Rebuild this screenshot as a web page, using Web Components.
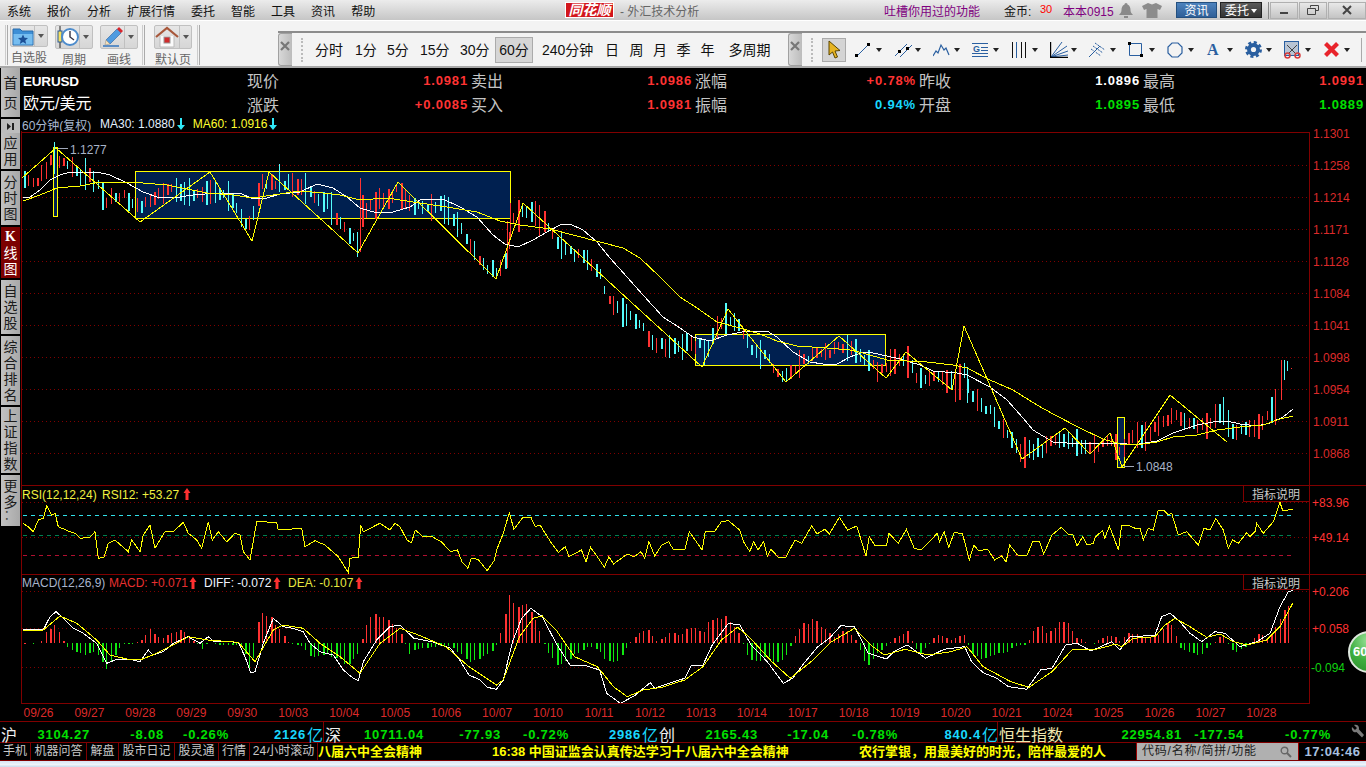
<!DOCTYPE html>
<html lang="zh">
<head>
<meta charset="utf-8">
<title>同花顺 - 外汇技术分析</title>
<style>
  html, body { margin: 0; height: 767px; overflow: hidden; background: #000; }
  body { font-family: "Liberation Sans", "Noto Sans CJK SC", sans-serif; }
</style>
</head>
<body>
<ths-app></ths-app>

<script>
const FONT = '"Liberation Sans", "Noto Sans CJK SC", sans-serif';
const ARROW_DOWN = '<svg width="8" height="12" viewBox="0 0 8 12"><path d="M3 0h2v7h3l-4 5-4-5h3z" fill="#30e8f8"/></svg>';

// ---------- title bar ----------
class TitleBar extends HTMLElement {
  constructor() {
    super();
    this.attachShadow({ mode: 'open' });
  }
  connectedCallback() {
    const menu = ['系统', '报价', '分析', '扩展行情', '委托', '智能', '工具', '资讯', '帮助'];
    this.shadowRoot.innerHTML = `
    <style>
      :host { display: flex; align-items: center; height: 20px; font: 12px ${FONT};
              background: linear-gradient(#ececec, #c6c6c6); color: #111; box-sizing: border-box; }
      .menu { flex: 0 0 566px; display: flex; gap: 16px; padding-left: 7px; box-sizing: border-box; }
      .logo { flex: 0 0 47px; height: 14px; line-height: 14px; background: #d2161c; color: #fff; font-size: 14px;
              font-weight: bold; font-style: italic; text-align: center; outline: 1px solid #fff; white-space: nowrap; overflow: hidden; }
      .sub { flex: 0 0 264px; margin-left: 7px; color: #666; }
      .tucao { flex: 0 0 120px; color: #800080; }
      .coin { flex: 0 0 36px; color: #111; }
      .num { flex: 0 0 23px; color: #f00; font-size: 11px; margin-top: -3px; }
      .user { flex: 0 0 55px; color: #800080; }
      .ico { display: block; }
      .btn { height: 16px; line-height: 16px; color: #fff; text-align: center; box-sizing: border-box; }
      .zx { flex: 0 0 41px; margin-left: 14px; background: linear-gradient(#4d82bd, #2f5f98); border: 1px solid #24507f; }
      .wt { flex: 0 0 42px; margin-left: 3px; background: linear-gradient(#5a5a5a, #333); border: 1px solid #222; }
      .wt i { display: inline-block; border: 3px solid transparent; border-top: 4px solid #fff; border-bottom: 0; margin: 0 0 2px 2px; }
      .win { display: flex; margin-left: 6px; gap: 1px; border-left: 1px solid #888; padding-left: 1px; }
      .win div { height: 17px; width: 28px; display: flex; align-items: center; justify-content: center;
                 background: linear-gradient(#e8e8e8, #c4c4c4); border: 1px solid #b0b0b0; box-sizing: border-box; }
      .win div:last-child { width: 38px; }
    </style>
    <div class="menu">${menu.map(m => `<span>${m}</span>`).join('')}</div>
    <div class="logo">同花顺</div>
    <div class="sub">- 外汇技术分析</div>
    <div class="tucao">吐槽你用过的功能</div>
    <div class="coin">金币:</div>
    <div class="num">30</div>
    <div class="user">本本0915</div>
    <svg class="ico" width="16" height="17" viewBox="0 0 16 17" style="margin-right:8px"><path d="M8 1c1 0 1.500.8 1.500 1.500C12 3.500 12.500 6 12.500 8c0 2 1 3.500 2.500 5H1c1.500-1.500 2.500-3 2.500-5 0-2 .5-4.500 3-5.500C6.500 1.800 7 1 8 1z" fill="#8a8a8a"/><rect x="6" y="14" width="4" height="2" fill="#8a8a8a"/></svg>
    <svg class="ico" width="20" height="16" viewBox="0 0 20 16"><path d="M6 1l4 1.500L14 1l6 3-2 4-2.500-1v9h-11V7L2 8 0 4z" fill="#8c8c8c"/></svg>
    <div class="btn zx">资讯</div>
    <div class="btn wt">委托<i></i></div>
    <div class="win">
      <div><svg width="10" height="10"><rect x="1" y="7" width="8" height="2" fill="#444"/></svg></div>
      <div><svg width="12" height="10"><path d="M3.500 2.500v-2h8v5h-3M.5 3.500h8v6h-8z" fill="none" stroke="#444"/></svg></div>
      <div><svg width="10" height="10"><path d="M1 1l8 8M9 1L1 9" stroke="#444" stroke-width="2"/></svg></div>
    </div>`;
  }
}
customElements.define('title-bar', TitleBar);

// ---------- big button with a label under it (left toolbar) ----------
class ToolBtn extends HTMLElement {
  constructor() {
    super();
    this.attachShadow({ mode: 'open' });
  }
  connectedCallback() {
    this.shadowRoot.innerHTML = `
    <style>
      :host { display: flex; flex-direction: column; align-items: center; width: 38px; font: 12px ${FONT}; color: #666; }
      .b { display: flex; width: 38px; height: 25px; box-sizing: border-box; border: 1px solid #c0c0c0; border-radius: 2px;
           background: linear-gradient(#e6e6e6, #d6d6d6); }
      .i { flex: 1; display: flex; align-items: center; justify-content: center; border-right: 1px solid #c0c0c0; }
      .d { flex: 0 0 12px; display: flex; align-items: center; justify-content: center; }
      .d i { border: 3.500px solid transparent; border-top: 4px solid #555; border-bottom: 0; }
      .l { margin-top: 3px; line-height: 16px; white-space: nowrap; }
    </style>
    <div class="b"><div class="i"><slot></slot></div><div class="d"><i></i></div></div>
    <div class="l">${this.getAttribute('label')}</div>`;
  }
}
customElements.define('tool-btn', ToolBtn);

// ---------- grey strip with the x at the start of a toolbar ----------
class BarGrip extends HTMLElement {
  constructor() {
    super();
    this.attachShadow({ mode: 'open' });
  }
  connectedCallback() {
    this.shadowRoot.innerHTML = `
    <style>
      :host { display: flex; flex: 0 0 auto; height: 33px; }
      .x { width: 14px; background: linear-gradient(90deg, #d8d8d8, #bcbcbc); border: 1px solid #a0a0a0; border-right: 0;
           border-radius: 3px 0 0 3px; box-sizing: border-box; padding: 4px 0 0 1px; }
      .g { width: 4px; height: 24px; margin: 5px 0 0 9px; border-left: 2px dotted #bbb; box-sizing: border-box; }
    </style>
    <div class="x"><svg width="10" height="10" viewBox="0 0 10 10"><path d="M1 1l8 8M9 1L1 9" stroke="#777" stroke-width="2.200"/></svg></div>
    <div class="g"></div>`;
  }
}
customElements.define('bar-grip', BarGrip);

// ---------- drawing tool icon + small drop arrow ----------
class DrawTool extends HTMLElement {
  constructor() {
    super();
    this.attachShadow({ mode: 'open' });
  }
  connectedCallback() {
    this.shadowRoot.innerHTML = `
    <style>
      :host { display: flex; align-items: center; flex: 0 0 39px; height: 20px; }
      .s { width: 20px; height: 18px; display: flex; align-items: center; }
      i { margin-left: 1px; border: 3.500px solid transparent; border-top: 4px solid #222; border-bottom: 0; }
    </style>
    <div class="s"><slot></slot></div><i></i>`;
  }
}
customElements.define('draw-tool', DrawTool);

// ---------- toolbars ----------
class ToolBar extends HTMLElement {
  constructor() {
    super();
    this.attachShadow({ mode: 'open' });
  }
  connectedCallback() {
    const periods = [['分时', 315, 27], ['1分', 355, 21], ['5分', 387, 20], ['15分', 420, 27], ['30分', 460, 27],
      ['60分', 495, 38, 1], ['240分钟', 542, 49], ['日', 605, 14], ['周', 629, 15], ['月', 653, 14], ['季', 676, 15], ['年', 700, 15], ['多周期', 728, 43]];
    let last = 315;
    const items = periods.map(p => {
      const gap = p[1] - last;
      last = p[1] + p[2];
      return `<span class="p${p[3] ? ' on' : ''}" style="margin-left:${gap}px;width:${p[2]}px">${p[0]}</span>`;
    }).join('');
    this.shadowRoot.innerHTML = `
    <style>
      :host { display: flex; height: 48px; box-sizing: border-box; background: #f3f3f3; border-top: 1px solid #fff;
              border-bottom: 2px solid #a8a8a8; font: 14px ${FONT}; color: #111; position: relative; }
      .left { flex: 0 0 278px; display: flex; box-sizing: border-box; padding: 4px 0 0 5px; }
      .sep { width: 3px; height: 40px; border-right: 1px solid #aaa; border-left: 1px solid #ccc; box-sizing: border-box; flex: 0 0 auto; }
      .left tool-btn { margin-left: 7px; }
      .right { flex: 1; align-self: flex-end; display: flex; align-items: center; height: 35px; border-top: 2px solid #8c8c8c; box-sizing: border-box; }
      .periods { display: flex; align-items: center; flex: 0 0 473px; margin-left: 10px; height: 33px; }
      .p { text-align: center; white-space: nowrap; height: 26px; line-height: 26px; box-sizing: border-box; }
      .on { background: #d6d6d6; border: 1px solid #ababab; line-height: 24px; }
      .cursor { width: 24px; height: 24px; margin: 0 9px 0 7px; display: flex; align-items: center; justify-content: center;
                background: #d4d4d4; border: 1px solid #aaa; box-sizing: border-box; }
      .tools { display: flex; align-items: center; }
      .end { width: 1px; height: 24px; background: #aaa; }
    </style>
    <div class="left">
      <div class="sep"></div>
      <tool-btn label="自选股" style="margin-left:2px"><svg width="22" height="20" viewBox="0 0 22 20"><path d="M1 3h7l2 2h11v14H1z" fill="#3d8fd6" stroke="#2b6cab"/><path d="M1.500 8h19v10.500h-19z" fill="#76bdf0"/><path d="M11 8.500l1.500 3.300 3.500.3-2.700 2.300.9 3.500-3.200-1.900-3.200 1.900.9-3.500L6 12.100l3.500-.3z" fill="#1c4f96"/></svg></tool-btn>
      <tool-btn label="周期"><svg width="22" height="22" viewBox="0 0 22 22"><path d="M3 0v22" stroke="#222"/><rect x="1" y="5" width="4" height="11" fill="#f5e060" stroke="#2a5a9a"/><circle cx="13" cy="11" r="8" fill="#fff" stroke="#4d8ccc" stroke-width="2"/><path d="M13 5v6l4 3" fill="none" stroke="#334" stroke-width="1.400"/></svg></tool-btn>
      <tool-btn label="画线"><svg width="22" height="22" viewBox="0 0 22 22"><path d="M1 20h16" stroke="#3d7cc0" stroke-width="1.600"/><path d="M4 14L15 3l4 4L8 18z" fill="#4f9be0" stroke="#2a5f9e" stroke-width=".6"/><path d="M4 14l4 4-5 1z" fill="#f4dfb8" stroke="#888" stroke-width=".5"/><path d="M15 3l2-2 4 4-2 2z" fill="#d8262c"/></svg></tool-btn>
      <div class="sep" style="margin-left:4px"></div>
      <tool-btn label="默认页" style="margin-left:9px"><svg width="24" height="22" viewBox="0 0 24 22"><path d="M5 10v11h14V10" fill="#fbfbfb" stroke="#bbb"/><path d="M1 11L12 2l11 9" fill="none" stroke="#a8573a" stroke-width="2.200"/><rect x="9" y="11" width="6" height="6" fill="#d02c2c" stroke="#999"/></svg></tool-btn>
      <div class="sep" style="margin-left:5px"></div>
    </div>
    <div class="right">
      <bar-grip></bar-grip>
      <div class="periods">${items}</div>
      <bar-grip></bar-grip>
      <div class="cursor"><svg width="14" height="20" viewBox="0 0 14 20"><path d="M2 1v14l3.500-3 2.500 6 2.500-1-2.500-6 5-.5z" fill="#e6b422" stroke="#5a4500"/></svg></div>
      <div class="tools">
        <draw-tool><svg width="16" height="16" viewBox="0 0 16 16"><path d="M2 14L14 2" stroke="#2a5fa0"/><rect x="0" y="12" width="3" height="3"/><rect x="12" y="1" width="3" height="3"/></svg></draw-tool>
        <draw-tool><svg width="20" height="16" viewBox="0 0 20 16"><path d="M1 14L13 2M6 15L18 3" stroke="#2a5fa0"/><rect x="4" y="8" width="3" height="3"/><rect x="12" y="5" width="3" height="3"/></svg></draw-tool>
        <draw-tool><svg width="17" height="16" viewBox="0 0 17 16"><path d="M0 14l3-5 2 2 3-8 3 5 2-2 3 7" fill="none" stroke="#2a5fa0" stroke-width="1.200"/></svg></draw-tool>
        <draw-tool><svg width="16" height="16" viewBox="0 0 16 16"><path d="M0 1.500h16M9 5.500h7M9 8.500h7M0 11.500h16M0 14.500h16" stroke="#2a5fa0"/><text x="1" y="10" font-size="9" font-weight="bold" font-family="Liberation Sans" fill="#2a5fa0">G</text></svg></draw-tool>
        <draw-tool><svg width="16" height="16" viewBox="0 0 16 16"><path d="M1.500 0v16M5.500 0v16M10.500 0v16M14.500 0v16" stroke="#111"/><path d="M5.500 0v16" stroke="#2a5fa0"/></svg></draw-tool>
        <draw-tool><svg width="18" height="16" viewBox="0 0 18 16"><path d="M1 15L12 0M1 15L17 4M1 15L18 9M1 15L18 13" stroke="#2a5fa0"/><path d="M.5 0v15.500H18" fill="none" stroke="#000" stroke-width="1.400"/></svg></draw-tool>
        <draw-tool><svg width="17" height="16" viewBox="0 0 17 16"><path d="M0 15L11 4" stroke="#2a5fa0"/><path d="M6 1l10 7M4 4l10 7M2 7l10 7" stroke="#2a5fa0" stroke-dasharray="2 1"/></svg></draw-tool>
        <draw-tool><svg width="16" height="16" viewBox="0 0 16 16"><path d="M1.500 1.500h12v12h-12z" fill="none" stroke="#2a5fa0"/><rect y="0" width="3" height="3"/><rect x="12" y="12" width="3" height="3"/></svg></draw-tool>
        <draw-tool><svg width="16" height="16" viewBox="0 0 16 16"><path d="M5 1h6l4 4v6l-4 4H5l-4-4V5z" fill="none" stroke="#2a5fa0" stroke-width="1.200"/></svg></draw-tool>
        <draw-tool><svg width="16" height="18" viewBox="0 0 16 18" style="overflow:visible"><text x="1" y="14" font-size="16" font-weight="bold" font-family="Liberation Serif" fill="#2a5fa0">A</text></svg></draw-tool>
        <draw-tool><svg width="17" height="17" viewBox="0 0 17 17"><circle cx="8.500" cy="8.500" r="6.500" fill="#2a5fa0"/><circle cx="8.500" cy="8.500" r="7" fill="none" stroke="#2a5fa0" stroke-width="3" stroke-dasharray="3 2.500"/><circle cx="8.500" cy="8.500" r="2.600" fill="#f3f3f3"/></svg></draw-tool>
        <draw-tool><svg width="17" height="18" viewBox="0 0 17 18"><rect x=".5" y=".5" width="14" height="14" fill="#b8c4d4" stroke="#2a5fa0"/><path d="M3 4l9 9M13 4l-9 9" stroke="#444"/><circle cx="3.500" cy="14.500" r="2.500" fill="none" stroke="#d83c3c" stroke-width="1.500"/><circle cx="13.500" cy="14.500" r="2.500" fill="none" stroke="#d83c3c" stroke-width="1.500"/></svg></draw-tool>
        <draw-tool style="flex-basis:38px"><svg width="17" height="17" viewBox="0 0 17 17"><path d="M2.500 2.500l12 12M14.500 2.500l-12 12" stroke="#e8232b" stroke-width="4.200"/></svg></draw-tool>
      </div>
      <div class="end"></div>
    </div>`;
  }
}
customElements.define('tool-bar', ToolBar);

// ---------- left side tabs ----------
class SideTab extends HTMLElement {
  constructor() {
    super();
    this.attachShadow({ mode: 'open' });
  }
  connectedCallback() {
    const on = this.hasAttribute('active');
    const text = this.textContent.trim();
    const lh = this.getAttribute('lh') || 16;
    // one character per line, the trailing dots stay together
    const body = text.replace(/\.+$/, '');
    const dots = text.slice(body.length);
    const chars = [...body].map(ch => ch === 'K' ? '<span class="c k">K</span>' : `<span class="c">${ch}</span>`).join('')
      + (dots ? `<span class="dots">${dots}</span>` : '');
    this.shadowRoot.innerHTML = `
    <style>
      :host { display: flex; flex-direction: column; align-items: center; justify-content: center; box-sizing: border-box;
              width: 19px; height: ${this.getAttribute('h')}px; margin-left: 1px; overflow: hidden; flex: 0 0 auto;
              background: ${on ? '#7c0000' : 'linear-gradient(90deg,#c2c2c2,#a8a8a8)'}; color: ${on ? '#fff' : '#1c1c1c'};
              font: 14px/${lh}px ${FONT}; text-align: center; }
      .c { display: block; width: 15px; }
      .k { font-weight: bold; font-family: "Liberation Serif", serif; }
      .dots { display: block; writing-mode: vertical-rl; font-size: 14px; line-height: 15px; letter-spacing: 3px; height: 14px; }
    </style>
    ${chars}`;
  }
}
customElements.define('side-tab', SideTab);

class SideTabs extends HTMLElement {
  constructor() {
    super();
    this.attachShadow({ mode: 'open' });
  }
  connectedCallback() {
    this.shadowRoot.innerHTML = `
    <style>
      :host { display: flex; flex-direction: column; gap: 2px; flex: 0 0 21px; background: #000; }
      .play { height: 14px; background: #bdbdbd; margin: 0 0 -2px 1px; width: 19px; display: flex; align-items: center; justify-content: center; }
    </style>
    <side-tab h="49" lh="20">首页</side-tab>
    <div class="play"><svg width="9" height="9"><path d="M1 1l4 3.500L1 8z M6 1h2v7H6z" fill="#222"/></svg></div>
    <side-tab h="36">应用</side-tab>
    <side-tab h="54">分时图</side-tab>
    <side-tab h="51" active>K线图</side-tab>
    <side-tab h="54">自选股</side-tab>
    <side-tab h="69">综合排名</side-tab>
    <side-tab h="66">上证指数</side-tab>
    <side-tab h="51">更多..</side-tab>`;
  }
}
customElements.define('side-tabs', SideTabs);

// ---------- quote header ----------
class QuoteHead extends HTMLElement {
  constructor() {
    super();
    this.attachShadow({ mode: 'open' });
  }
  connectedCallback() {
    const R = '#ff3333', G = '#00e000', W = '#ffffff', C = '#19d8ff';
    const cells = [
      ['现价', '1.0981', R], ['卖出', '1.0986', R], ['涨幅', '+0.78%', R], ['昨收', '1.0896', W], ['最高', '1.0991', R],
      ['涨跌', '+0.0085', R], ['买入', '1.0981', R], ['振幅', '0.94%', C], ['开盘', '1.0895', G], ['最低', '1.0889', G]
    ];
    const cell = c => `<div class="c"><span class="k">${c[0]}</span><b style="color:${c[2]}">${c[1]}</b></div>`;
    this.shadowRoot.innerHTML = `
    <style>
      :host { display: block; background: #000; font: 16px ${FONT}; color: #fff; }
      .g { display: grid; grid-template-columns: 226px repeat(5, 224px); grid-auto-rows: 24px; }
      .n { padding-left: 2px; line-height: 24px; white-space: nowrap; }
      .en { font-size: 13.500px; font-weight: bold; letter-spacing: -.2px; line-height: 27px; }
      .c { display: flex; justify-content: space-between; align-items: center; padding-right: 3px; }
      .k { color: #c4c4c4; }
      b { font-size: 13px; letter-spacing: .85px; }
      .info { display: flex; align-items: center; height: 14px; margin-top: 1px; padding-left: 1px; font-size: 12px; white-space: nowrap; }
      .info svg { margin: 0 0 0 2px; }
    </style>
    <div class="g">
      <div class="n en">EURUSD</div>${cells.slice(0, 5).map(cell).join('')}
      <div class="n">欧元/美元</div>${cells.slice(5).map(cell).join('')}
    </div>
    <div class="info">
      <span style="color:#a8b8d0;width:78px">60分钟(复权)</span>
      <span style="color:#e4f0ff">MA30: 1.0880</span>${ARROW_DOWN}
      <span style="color:#ffff30;margin-left:8px">MA60: 1.0916</span>${ARROW_DOWN}
    </div>`;
  }
}
customElements.define('quote-head', QuoteHead);

// ---------- helpers for the chart: traced points, crop space -> page space ----------
function tr(list, ox, oy, sx, sy) {
  const out = [];
  for (let i = 0; i < list.length; i += 2) out.push([ox + list[i] / sx, oy + list[i + 1] / (sy || sx)]);
  return out;
}
function interp(p, x) {
  if (x <= p[0][0]) return p[0][1];
  for (let i = 1; i < p.length; i++) {
    if (x <= p[i][0]) {
      const t = (x - p[i - 1][0]) / (p[i][0] - p[i - 1][0] || 1);
      return p[i - 1][1] + t * (p[i][1] - p[i - 1][1]);
    }
  }
  return p[p.length - 1][1];
}
function stitch(a, b, c) {
  return [...a.filter(p => p[0] <= 400), ...b.filter(p => p[0] > 400 && p[0] < 1120), ...c.filter(p => p[0] >= 1120)];
}
const line = (pts, color, w) =>
  `<polyline points="${pts.map(p => p[0].toFixed(1) + ',' + p[1].toFixed(1)).join(' ')}" fill="none" stroke="${color}" stroke-width="${w || 1}"/>`;

// traced price path: the middle of the candles
const MID = [24,178,35,185,45,170,52,160,56,155,62,165,70,165,80,175,90,178,97,180,100,190,104,205,110,195,120,195,130,200,138,205,142,205,150,200,160,195,170,190,180,190,190,195,205,192,215,192,225,195,235,205,245,225,252,225,256,200,262,180,270,185,280,180,290,185,300,185,310,195,320,200,330,205,340,225,350,235,357,245,362,210,370,205,380,200,390,195,398,190,405,197,415,205,425,205,440,205,450,215,460,225,470,245,480,260,490,270,497,270,505,260,510,235,515,215,525,210,535,215,545,225,555,240,570,250,585,260,600,275,610,305,620,312,630,315,640,325,650,340,660,345,670,345,680,345,690,345,700,345,705,355,712,335,720,325,728,318,738,325,745,340,755,350,765,355,775,370,785,378,795,372,805,360,815,355,825,352,835,350,845,345,855,350,865,360,875,370,885,368,895,362,905,358,915,375,925,378,935,378,945,378,955,385,965,370,970,395,980,405,990,410,1000,425,1010,440,1020,452,1030,450,1040,450,1050,442,1060,437,1070,440,1080,447,1095,450,1110,440,1120,455,1130,437,1145,435,1160,425,1175,415,1190,425,1205,425,1220,415,1230,430,1250,428,1265,420,1272,405,1278,390];
const MA30 = [23,198,30,197,40,190,50,180,60,175,70,172,80,172,97,172,110,175,127,183,143,192,157,197,173,198,193,195,217,193,240,193,253,199,267,198,280,194,300,192,317,184,333,188,347,197,360,208,377,213,393,212,410,207,420,200,443,199,460,207,477,217,493,235,505,244,518,247,533,240,547,232,560,225,570,224,583,230,597,242,610,258,627,277,643,295,663,317,680,328,693,337,710,341,727,335,747,331,767,331,777,337,793,352,810,362,823,364,837,364,850,357,863,352,873,353,887,356,900,359,920,365,933,371,957,373,967,375,990,387,1007,400,1023,418,1033,430,1053,442,1067,443,1093,444,1120,443,1133,445,1157,441,1173,433,1197,425,1213,422,1227,421,1240,424,1257,426,1270,423,1283,417,1293,409];
const MA60 = [23,201,40,195,57,188,80,186,100,182,120,182,143,183,167,185,187,189,207,193,233,195,253,198,273,195,300,191,323,193,340,195,360,200,387,198,413,202,447,207,477,212,500,221,520,225,550,229,573,235,600,242,623,248,640,258,660,277,680,297,697,308,717,322,740,328,760,334,777,341,797,346,827,348,850,350,863,353,887,360,927,362,953,365,967,368,990,380,1013,390,1037,405,1053,414,1080,428,1103,439,1120,444,1143,444,1157,442,1173,437,1197,435,1217,430,1240,427,1263,425,1280,419,1293,416];
const ZIG = [22,178,56,148,140,222,210,172,252,241,269,172,358,253,398,182,496,279,523,203,702,367,728,309,786,382,839,336,886,378,906,352,952,390,964,326,1022,459,1065,428,1090,454,1110,433,1122,467,1170,395,1227,442];

const RSI = stitch(
  tr([68,130,85,140,100,155,115,120,130,115,140,78,155,105,165,100,175,140,210,155,225,160,240,175,270,172,285,155,295,235,312,232,325,190,345,180,385,215,395,180,420,215,430,165,450,135,465,205,495,155,520,155,550,127,565,160,590,180,605,205,625,125,637,180,655,155,680,185,705,160,720,165,730,215,750,240,770,125,830,127,835,150,905,145,915,200,945,182,975,195,1015,230,1045,278,1050,235,1075,232,1082,135,1090,155,1140,130,1170,150,1185,130,1200,140], 0, 480, 3),
  tr([0,105,15,150,25,158,33,120,50,140,70,140,90,155,110,185,125,180,135,215,148,235,155,205,170,208,190,242,205,212,212,175,225,130,238,68,248,118,268,82,285,82,295,110,305,105,330,160,345,187,360,170,368,200,395,180,405,215,415,172,430,200,445,232,455,200,465,222,495,192,510,200,525,185,533,205,542,155,555,198,570,165,585,155,595,178,620,180,630,125,658,180,665,125,685,125,700,95,715,92,740,120,748,155,762,185,770,155,780,180,792,155,800,198,808,178,825,203,840,203,860,150,875,160,897,107,908,132,925,118,935,132,957,82,975,120,995,108,1015,198,1022,140,1035,168,1060,165,1065,130,1085,160,1103,118,1120,175,1135,180,1160,145,1170,130,1175,155,1185,125,1195,172,1207,128,1225,130,1240,210,1250,165,1260,182,1280,178,1295,210,1310,198,1320,215,1328,165,1345,195,1365,198,1378,155,1393,155,1402,192,1420,135,1440,112,1455,132,1465,132,1475,168,1487,140,1497,165,1510,160,1515,140,1530,122,1535,145,1545,108,1565,180], 400, 490, 2.178, 3),
  tr([0,545,10,560,25,527,40,550,55,600,65,525,85,525,105,535,120,535,130,570,145,535,160,540,175,480,190,480,205,495,215,490,235,555,260,545,295,585,312,535,330,540,347,505,370,540,385,595,398,570,415,580,440,548,450,560,465,545,470,520,490,550,520,515,540,457,548,482,578,478], 1100, 350, 3)
);
const DIFF = stitch(
  tr([68,447,130,450,150,410,168,395,185,410,220,445,250,460,290,490,310,530,320,550,345,540,385,537,420,545,445,510,460,525,490,515,520,490,565,470,600,490,625,470,640,483,715,487,735,530,752,578,765,575,790,490,820,415,850,440,880,445,910,455,930,490,960,515,1000,525,1030,570,1060,595,1075,602,1090,545,1130,480,1170,440,1200,435], 0, 480, 3),
  tr([0,403,30,445,70,455,110,475,130,510,150,555,175,570,190,592,210,598,225,570,245,455,265,385,285,355,310,380,340,460,370,525,400,525,435,540,450,610,480,640,510,618,545,578,555,595,575,585,620,565,635,525,660,525,680,465,715,400,740,405,765,465,800,515,835,580,855,565,880,520,910,470,935,445,960,407,990,410,1020,490,1060,507,1075,485,1105,465,1145,505,1185,478,1230,470,1245,515,1270,548,1300,565,1325,590,1365,598,1395,540,1420,535,1450,465,1475,460,1505,483,1550,455,1568,480], 400, 490, 2.178, 3),
  tr([60,900,90,860,130,858,165,855,185,800,210,790,235,810,270,850,305,875,345,845,375,850,420,890,470,875,510,850,540,770,565,725,578,722], 1100, 350, 3)
);
const DEA = stitch(
  tr([68,450,130,450,180,408,230,430,290,480,330,525,380,537,420,540,470,520,520,495,565,470,625,480,715,487,765,545,820,450,850,435,910,445,960,490,1020,530,1080,580,1140,490,1200,445], 0, 480, 3),
  tr([0,412,40,435,100,470,150,530,210,585,225,570,260,440,290,385,310,378,340,420,380,500,430,530,465,590,495,620,530,600,570,592,620,570,660,530,700,450,735,412,760,440,810,515,850,565,900,510,940,455,990,415,1030,470,1055,495,1100,478,1150,495,1200,485,1235,470,1270,530,1330,575,1370,592,1420,545,1465,478,1510,480,1560,462], 400, 490, 2.178, 3),
  tr([65,890,100,865,165,860,195,825,225,805,270,830,320,862,360,852,400,875,440,885,500,870,540,830,578,760], 1100, 350, 3)
);
// histogram heights up from the zero line, in the same crop spaces
const HIST = stitch(
  tr([68,2,100,-2,125,5,140,40,165,55,180,25,190,5,205,-15,230,-30,260,-35,290,-30,310,-60,320,-80,340,-40,365,-5,400,-2,430,15,450,45,470,20,490,15,510,30,540,45,565,25,580,3,600,-8,610,-25,620,5,640,-3,680,-8,720,-5,740,-45,752,-85,765,-20,770,60,790,92,810,85,825,60,845,30,860,5,880,-3,910,-10,930,-40,960,-35,1000,-40,1040,-65,1060,-50,1075,-30,1082,0,1090,30,1110,80,1160,80,1180,50,1200,30], 0, 0, 3),
  tr([0,20,10,0,20,-35,30,-20,60,-15,90,-10,110,-10,130,-30,150,-55,180,-40,200,-25,213,0,222,50,238,145,250,115,270,120,285,100,300,50,312,0,325,-40,345,-75,365,-50,385,-30,410,-10,430,-20,450,-55,465,-65,480,-45,498,-5,505,10,520,30,540,45,555,5,570,15,590,30,610,20,630,55,650,40,660,25,670,65,705,80,730,50,745,5,750,-25,765,-55,800,-45,825,-65,845,-30,855,10,870,50,900,75,920,50,945,20,970,40,995,5,1005,-40,1018,-70,1040,-30,1062,-5,1075,15,1085,20,1105,35,1115,5,1120,-15,1135,-30,1150,-5,1165,20,1185,25,1195,5,1210,15,1228,25,1235,0,1250,-40,1265,-50,1295,-35,1320,-30,1335,-10,1365,-5,1375,30,1392,60,1405,30,1420,35,1440,70,1455,60,1470,20,1490,5,1510,-3,1525,15,1550,25,1568,5], 400, 0, 2.178, 3),
  tr([85,35,110,25,130,20,160,15,180,30,205,70,225,30,232,0,240,-15,260,-25,300,-35,325,-10,345,5,365,25,385,-5,400,-30,430,-15,450,0,475,30,500,15,530,50,545,90,570,115,580,75], 1100, 0, 3)
);

// ---------- the chart canvas, in page coordinates ----------
class KlineChart extends HTMLElement {
  constructor() {
    super();
    this.attachShadow({ mode: 'open' });
  }
  connectedCallback() {
    let seed = 20161028;
    const rnd = () => (seed = (seed * 1664525 + 1013904223) >>> 0) / 4294967296;
    const RED = '#ff3232', CY = '#54fcfc', GR = '#10e810', DIM = '#800000';
    const mid = tr(MID, 0, 0, 1), zig = tr(ZIG, 0, 0, 1);
    let bars = '', hist = '';

    const bar = (x, y1, y2, c, w) => `<rect x="${Math.round(x)}" y="${Math.round(y1)}" width="${w || 1}" height="${Math.max(1, Math.round(y2 - y1))}" fill="${c}"/>`;
    for (let i = 0; i < 293; i++) {
      const x = 24 + i * 4.33;
      const w = i % 3 === 0 ? 2 : 1;
      if (x < 1278) {
        const y = interp(mid, x) + (rnd() - .5) * 6;
        const slope = interp(mid, x + 5) - interp(mid, x - 5);
        const up = rnd() < (slope < -2 ? .8 : slope > 2 ? .3 : .5);
        const len = 8 + rnd() * rnd() * 30;
        bars += bar(x, y - len / 2, y + len / 2, up ? RED : CY, w);
      }
      const h = interp(HIST, x);
      if (x <= 1294 && Math.abs(h) >= .5) {
        const v = h * (.88 + rnd() * .2);
        hist += h > 0 ? bar(x, 643 - v, 643, RED, w) : bar(x, 643, 643 - v, GR, w);
      }
    }
    // the long bars that stand out
    [[360, 178, 252, RED], [507, 221, 268, RED], [510, 203, 240, RED], [967, 367, 403, CY], [1223, 397, 420, CY],
     [1275, 395, 425, RED], [1281, 360, 400, RED], [1284, 360, 380, CY], [1287, 361, 371, CY], [1291, 368, 369, RED]]
      .forEach(b => { bars += bar(b[0], b[1], b[2], b[3], 1); });

    const prices = [['1.1301', 133], ['1.1258', 165], ['1.1214', 197], ['1.1171', 229], ['1.1128', 261], ['1.1084', 293],
      ['1.1041', 325], ['1.0998', 357], ['1.0954', 389], ['1.0911', 421], ['1.0868', 453]];
    const sub = [['+83.96', 502, RED], ['+49.14', 537, RED], ['+0.206', 591, RED], ['+0.058', 628, RED], ['-0.094', 667, '#10d010']];
    const dotted = y => `<path d="M22 ${y + .5}H1309" stroke="${DIM}" stroke-dasharray="1 3"/>`;
    const upArrow = (x, y) => `<path d="M${x} ${y}l3.500 5h-2v7h-3v-7h-2z" transform="translate(3 0)" fill="#ff3030"/>`;

    this.shadowRoot.innerHTML = `
    <style>
      :host { display: block; height: 573px; background: #000; }
      svg { display: block; overflow: visible; font: 12px ${FONT}; }
      .crisp * { shape-rendering: crispEdges; }
      .axis { fill: #dc2a2a; }
      .note { fill: #c8c8c8; }
    </style>
    <svg width="1345" height="573" viewBox="21 131 1345 573">
      <g class="crisp">
        ${prices.slice(1).map(p => dotted(p[1])).join('')}
        ${sub.map(p => dotted(p[1])).join('')}
        <rect x="135.500" y="171.500" width="375" height="47" fill="#002050" stroke="#ffff00"/>
        <rect x="695.500" y="334.500" width="190" height="31" fill="#002050" stroke="#ffff00"/>
        <rect x="53.500" y="147.500" width="4" height="69" fill="#002050" stroke="#ffff00"/>
        <rect x="1117.500" y="417.500" width="7" height="50" fill="#002050" stroke="#ffff00"/>
        ${bars}
        ${line(tr(MA30, 0, 0, 1), '#ffffff')}
        ${line(tr(MA60, 0, 0, 1), '#ffff00')}
        ${line(zig, '#ffff00')}
        <path d="M58 148.500h10M1124 466.500h10" stroke="#a0a8b8"/>

        <path d="M23 515.500H1293" stroke="#30e0e8" stroke-dasharray="4 4"/>
        <path d="M23 535.500H1293" stroke="#008050" stroke-dasharray="4 4"/>
        <path d="M23 555.500H1293" stroke="#b01030" stroke-dasharray="4 4"/>
        ${line(RSI, '#ffff00')}

        ${hist}
        ${line(DIFF, '#ffffff')}
        ${line(DEA, '#ffff00')}

        <path d="M21.500 131V703.500H1309.500V132M21 132.500H1309.500M21 485.500H1366M21 574.500H1366" fill="none" stroke="${DIM}"/>
        <path d="M1243.500 485v16.500H1310M1243.500 574v15.500H1310" fill="none" stroke="${DIM}"/>
      </g>
      ${prices.map(p => `<text class="axis" x="1313" y="${p[1] + 4.500}">${p[0]}</text>`).join('')}
      ${sub.map(p => `<text x="${p[0][0] === '-' ? 1311 : 1312}" y="${p[1] + 4.500}" style="fill:${p[2]}">${p[0]}</text>`).join('')}
      <text x="70" y="153.500" fill="#a8b4c8">1.1277</text>
      <text x="1136" y="470.500" fill="#a8b4c8">1.0848</text>
      <text class="note" x="1252" y="498.500">指标说明</text>
      <text class="note" x="1252" y="587.500">指标说明</text>

      <text x="22" y="498.500" fill="#f0f040">RSI(12,12,24)</text>
      <text x="102" y="498.500" fill="#f0f040">RSI12: +53.27</text>
      ${upArrow(184, 488)}
      <text x="22" y="586.500" fill="#a8b4cc">MACD(12,26,9)</text>
      <text x="109" y="586.500" fill="#e83030">MACD: +0.071</text>
      ${upArrow(190, 577)}
      <text x="204" y="586.500" fill="#f0f4ff">DIFF: -0.072</text>
      ${upArrow(274, 577)}
      <text x="288" y="586.500" fill="#e8e840">DEA: -0.107</text>
      ${upArrow(356, 577)}
    </svg>`;
  }
}
customElements.define('kline-chart', KlineChart);

// ---------- dates under the chart ----------
class DateAxis extends HTMLElement {
  constructor() {
    super();
    this.attachShadow({ mode: 'open' });
  }
  connectedCallback() {
    const d = ['09/26','09/27','09/28','09/29','09/30','10/03','10/04','10/05','10/06','10/07','10/10','10/11','10/12','10/13','10/14','10/17','10/18','10/19','10/20','10/21','10/24','10/25','10/26','10/27','10/28'];
    this.shadowRoot.innerHTML = `
    <style>
      :host { display: flex; height: 17px; margin-left: -8px; color: #dc2a2a; font: 12px/18px ${FONT}; }
      span { flex: 0 0 50.960px; text-align: center; }
    </style>
    ${d.map(t => `<span>${t}</span>`).join('')}`;
  }
}
customElements.define('date-axis', DateAxis);

// ---------- index strip ----------
class IndexCell extends HTMLElement {
  constructor() {
    super();
    this.attachShadow({ mode: 'open' });
  }
  connectedCallback() {
    const a = n => this.getAttribute(n);
    const vol = a('vol') ? `<b class="v">${a('vol')}</b><span class="y">亿</span>` : '';
    this.shadowRoot.innerHTML = `
    <style>
      :host { display: grid; grid-template-columns: ${a('cols')}; align-items: center; height: 20px; box-sizing: border-box;
              font: 16px ${FONT}; white-space: nowrap; ${a('line') === '1' ? 'border-right: 1px solid #800000;' : ''} }
      .n { color: ${a('name-color') || '#f0f0f0'}; padding-left: 1px; }
      b { font-size: 13px; letter-spacing: .8px; text-align: right; color: #00e000; }
      .v { color: #19d8ff; }
      .y { color: #19d8ff; text-align: right; }
    </style>
    <span class="n">${a('name')}</span><b>${a('val')}</b><b>${a('chg')}</b><b>${a('pct')}</b>${vol}`;
  }
}
customElements.define('index-cell', IndexCell);

class IndexBar extends HTMLElement {
  constructor() {
    super();
    this.attachShadow({ mode: 'open' });
  }
  connectedCallback() {
    this.shadowRoot.innerHTML = `
    <style>
      :host { display: flex; height: 21px; box-sizing: border-box; background: #000; border-top: 1px solid #800000; position: relative; }
      svg { margin-top: 2px; }
    </style>
    <index-cell name="沪" val="3104.27" chg="-8.08" pct="-0.26%" vol="2126" cols="20px 70px 74px 65px 77px 17px" line="1" style="width:324px"></index-cell>
    <index-cell name="深" val="10711.04" chg="-77.93" pct="-0.72%" vol="2986" cols="20px 80px 77px 68px 72px 17px" line="0" style="width:334px"></index-cell>
    <index-cell name="创" val="2165.43" chg="-17.04" pct="-0.78%" vol="840.4" cols="19px 81px 71px 69px 83px 17px" line="1" style="width:340px"></index-cell>
    <index-cell name="恒生指数" name-color="#f0e8b0" val="22954.81" chg="-177.54" pct="-0.77%" cols="68px 116px 62px 87px" style="width:353px"></index-cell>
    <svg width="14" height="15" viewBox="0 0 14 15"><path d="M1 3l3 3 2-2-3-3c2-1 5 0 5 3 0 .6 0 1-.2 1.300L13 11l-2 2.500-5.500-5.400C3 9 0 6.500 1 3z" fill="#7a7a7a"/></svg>`;
  }
}
customElements.define('index-bar', IndexBar);

// ---------- bottom status bar ----------
class StatusBar extends HTMLElement {
  constructor() {
    super();
    this.attachShadow({ mode: 'open' });
  }
  connectedCallback() {
    const tabs = [['手机', 31], ['机器问答', 56], ['解盘', 32], ['股市日记', 56], ['股灵通', 44], ['行情', 31], ['24小时滚动', 68]];
    this.shadowRoot.innerHTML = `
    <style>
      :host { display: flex; height: 19px; box-sizing: border-box; background: #000; border-top: 1px solid #800000; border-bottom: 1px solid #800000;
              font: 12px/17px ${FONT}; color: #c8c8c8; white-space: nowrap; }
      .t { box-sizing: border-box; text-align: center; border-right: 1px solid #800000; }
      .news { flex: 0 0 818px; display: flex; font-size: 13px; font-weight: bold; color: #ffff00; overflow: hidden; }
      .news span { flex: 0 0 auto; }
      .search { flex: 0 0 163px; box-sizing: border-box; background: #b0b0b0; border: 1px solid #900; border-width: 0 1px; color: #222;
                padding-left: 5px; display: flex; justify-content: space-between; align-items: center; letter-spacing: .8px; }
      .search svg { margin-right: 6px; }
      .clock { flex: 1; text-align: center; color: #a8c0e0; font-weight: bold; font-size: 13px; letter-spacing: .5px; }
    </style>
    ${tabs.map(t => `<div class="t" style="flex:0 0 ${t[1]}px">${t[0]}</div>`).join('')}
    <div class="news">
      <span style="width:174px">八届六中全会精神</span>
      <span style="width:367px">16:38 中国证监会认真传达学习十八届六中全会精神</span>
      <span>农行掌银，用最美好的时光，陪伴最爱的人</span>
    </div>
    <div class="search"><span>代码/名称/简拼/功能</span>
      <svg width="12" height="12" viewBox="0 0 12 12"><circle cx="4.500" cy="4.500" r="3.300" fill="none" stroke="#666" stroke-width="1.400"/><path d="M7 7l4 4" stroke="#666" stroke-width="2"/></svg>
    </div>
    <div class="clock">17:04:46</div>`;
  }
}
customElements.define('status-bar', StatusBar);

// ---------- the green period ball over the right edge ----------
class PeriodBall extends HTMLElement {
  constructor() {
    super();
    this.attachShadow({ mode: 'open' });
  }
  connectedCallback() {
    this.shadowRoot.innerHTML = `
    <style>
      :host { position: absolute; left: 1348px; top: 631px; width: 42px; height: 42px; box-sizing: border-box; border-radius: 50%;
              border: 2px solid #dfe8df; background: radial-gradient(circle at 50% 20%, #9be39b, #3fae3f 55%, #2c8f2c);
              color: #fff; font: bold 13px/38px "Liberation Sans", sans-serif; padding-left: 3px; }
    </style>60`;
  }
}
customElements.define('period-ball', PeriodBall);

// ---------- page ----------
class ThsApp extends HTMLElement {
  constructor() {
    super();
    this.attachShadow({ mode: 'open' });
  }
  connectedCallback() {
    this.shadowRoot.innerHTML = `
    <style>
      :host { display: block; position: relative; width: 1366px; height: 767px; overflow: hidden; background: #000; }
      .main { display: flex; height: 653px; }
      .right { flex: 1; min-width: 0; }
      .edge { height: 7px; background: linear-gradient(#d4e4f4, #eef4fa 50%, #b8cfe6); }
    </style>
    <title-bar></title-bar>
    <tool-bar></tool-bar>
    <div class="main">
      <side-tabs></side-tabs>
      <div class="right">
        <quote-head></quote-head>
        <kline-chart></kline-chart>
        <date-axis></date-axis>
      </div>
    </div>
    <index-bar></index-bar>
    <status-bar></status-bar>
    <div class="edge"></div>
    <period-ball></period-ball>`;
  }
}
customElements.define('ths-app', ThsApp);
</script>
</body>
</html>
